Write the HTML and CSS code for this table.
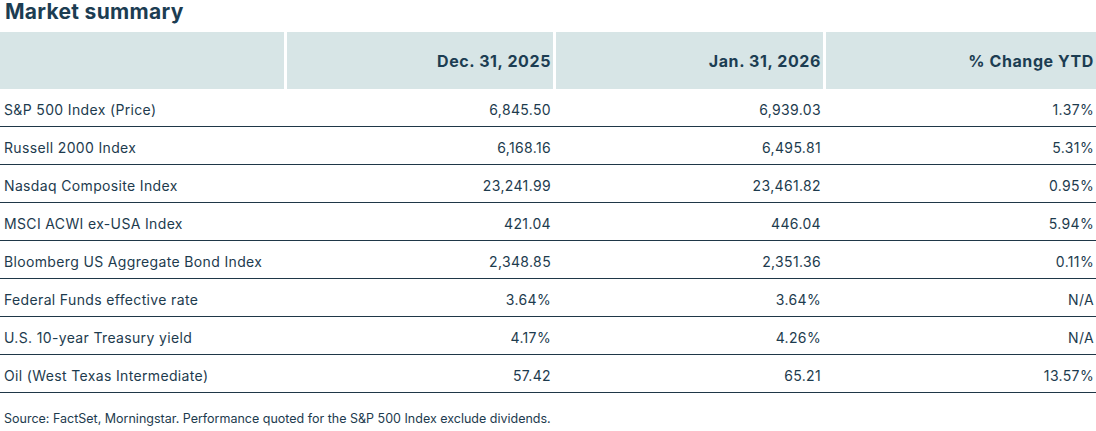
FILE: index.html
```html
<!DOCTYPE html>
<html>
<head>
<meta charset="utf-8">
<link rel="stylesheet" href="styles.css">
</head>
<body>
<h1 class="title">Market summary</h1>
<div class="table">
  <div class="head">
    <div class="hcell"></div>
    <div class="hcell">Dec. 31, 2025</div>
    <div class="hcell">Jan. 31, 2026</div>
    <div class="hcell">% Change YTD</div>
  </div>
  <div class="row"><div class="name">S&amp;P 500 Index (Price)</div><div class="num">6,845.50</div><div class="num">6,939.03</div><div class="num">1.37%</div></div>
  <div class="row"><div class="name">Russell 2000 Index</div><div class="num">6,168.16</div><div class="num">6,495.81</div><div class="num">5.31%</div></div>
  <div class="row"><div class="name">Nasdaq Composite Index</div><div class="num">23,241.99</div><div class="num">23,461.82</div><div class="num">0.95%</div></div>
  <div class="row"><div class="name">MSCI ACWI ex-USA Index</div><div class="num">421.04</div><div class="num">446.04</div><div class="num">5.94%</div></div>
  <div class="row"><div class="name">Bloomberg US Aggregate Bond Index</div><div class="num">2,348.85</div><div class="num">2,351.36</div><div class="num">0.11%</div></div>
  <div class="row"><div class="name">Federal Funds effective rate</div><div class="num">3.64%</div><div class="num">3.64%</div><div class="num">N/A</div></div>
  <div class="row"><div class="name">U.S. 10-year Treasury yield</div><div class="num">4.17%</div><div class="num">4.26%</div><div class="num">N/A</div></div>
  <div class="row"><div class="name">Oil (West Texas Intermediate)</div><div class="num">57.42</div><div class="num">65.21</div><div class="num">13.57%</div></div>
</div>
<p class="source">Source: FactSet, Morningstar. Performance quoted for the S&amp;P 500 Index exclude dividends.</p>
</body>
</html>
```
FILE: styles.css
```css
html, body {
  margin: 0;
  padding: 0;
  background: #ffffff;
}
body {
  font-family: Inter, "Liberation Sans", sans-serif;
  color: #1d3b4e;
  width: 1096px;
}
.title {
  margin: 0;
  padding: 0 0 0 5px;
  height: 32px;
  box-sizing: border-box;
  font-size: 21px;
  font-weight: bold;
  line-height: 23px;
  letter-spacing: 0.3px;
  color: #1c3d52;
}
.table {
  display: flex;
  flex-direction: column;
}
.head, .row {
  display: grid;
  grid-template-columns: 284px 266px 267px 1fr;
  column-gap: 3px;
}
.head {
  height: 57px;
}
.hcell {
  background: #d7e5e6;
  display: flex;
  align-items: center;
  justify-content: flex-end;
  padding: 1px 2px 0 0;
  font-weight: bold;
  font-size: 16px;
  letter-spacing: 0.6px;
  color: #1c3d52;
}
.row {
  height: 38px;
  box-sizing: border-box;
  padding-top: 3px;
  border-bottom: 1px solid #1f3747;
  align-items: center;
  font-size: 14px;
  letter-spacing: 0.35px;
}
.name {
  padding-left: 4px;
}
.num {
  text-align: right;
  padding-right: 2px;
}
.source {
  margin: 0;
  padding: 18px 0 0 4px;
  height: 38px;
  box-sizing: border-box;
  font-size: 12.5px;
}
```
